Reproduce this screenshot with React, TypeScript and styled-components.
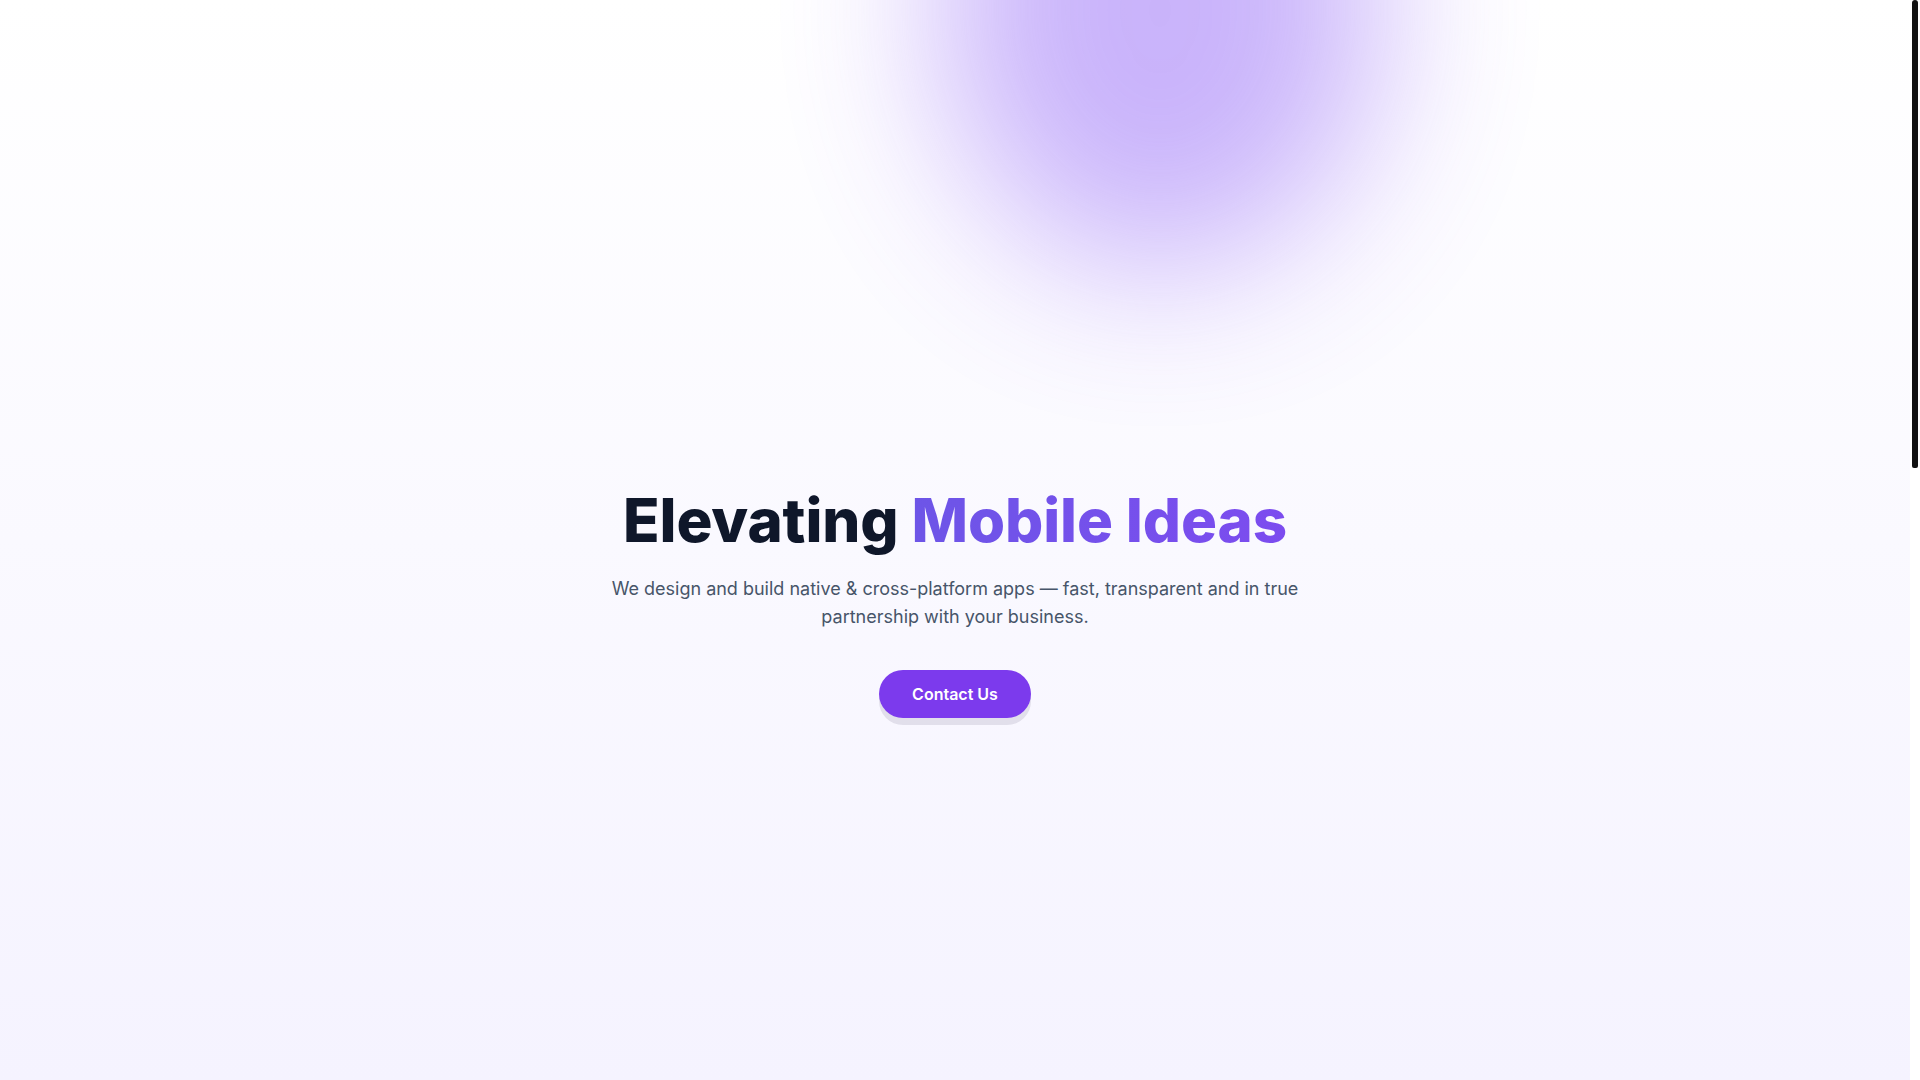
import React from 'react';
import styled, { createGlobalStyle } from 'styled-components';

const GlobalStyle = createGlobalStyle`
    * {
        box-sizing: border-box;
    }
    html, body {
        margin: 0;
        padding: 0;
        background: #ffffff;
        font-family: Inter, 'Noto Sans', sans-serif;
        -webkit-font-smoothing: antialiased;
    }
    #root {
        padding-right: 10px;
    }
`;

const Hero = styled.section`
    position: relative;
    overflow: hidden;
    min-height: 100vh;
    padding-top: 127px;
    display: flex;
    align-items: center;
    justify-content: center;
    background: linear-gradient(180deg, #ffffff 0%, #f5f3ff 100%);
`;

const Blob = styled.div`
    position: absolute;
    top: -250px;
    left: calc(50% + 205px);
    width: 440px;
    height: 520px;
    margin-left: -220px;
    border-radius: 50%;
    background: #8b5cf6;
    opacity: 0.46;
    filter: blur(80px);
    pointer-events: none;
`;

const Content = styled.div`
    position: relative;
    display: flex;
    flex-direction: column;
    align-items: center;
    text-align: center;
    padding: 0 24px;
`;

const Title = styled.h1`
    margin: 0;
    font-size: 60px;
    line-height: 1;
    font-weight: 800;
    letter-spacing: -0.002em;
    color: #0f172a;
`;

const Accent = styled.span`
    background: linear-gradient(90deg, #6d55e7 0%, #7c4cef 100%);
    -webkit-background-clip: text;
    background-clip: text;
    color: transparent;
`;

const Lead = styled.p`
    margin: 25px 0 0;
    max-width: 700px;
    font-size: 18px;
    line-height: 28px;
    color: #475569;
`;

const ContactButton = styled.button`
    margin-top: 39px;
    padding: 12px 33px;
    border: 0;
    border-radius: 999px;
    background: #7c3aed;
    color: #ffffff;
    font-family: inherit;
    font-size: 16px;
    line-height: 24px;
    font-weight: 600;
    cursor: pointer;
    box-shadow: 0 7px 0 rgba(30, 20, 60, 0.1);
`;

const ScrollRail = styled.div`
    position: fixed;
    top: 0;
    right: 0;
    width: 10px;
    height: 100vh;
    background: #ffffff;
`;

const ScrollThumb = styled.div`
    margin-left: 2px;
    width: 6px;
    height: 468px;
    border-radius: 3px 3px 2px 2px;
    background: #111111;
`;

const App: React.FC = (): JSX.Element => {
    return (
        <>
            <GlobalStyle />
            <Hero>
                <Blob />
                <Content>
                    <Title>
                        Elevating <Accent>Mobile Ideas</Accent>
                    </Title>
                    <Lead>
                        We design and build native &amp; cross-platform apps — fast, transparent and in true
                        partnership with your business.
                    </Lead>
                    <ContactButton>Contact Us</ContactButton>
                </Content>
            </Hero>
            <ScrollRail>
                <ScrollThumb />
            </ScrollRail>
        </>
    );
};

export default App;
